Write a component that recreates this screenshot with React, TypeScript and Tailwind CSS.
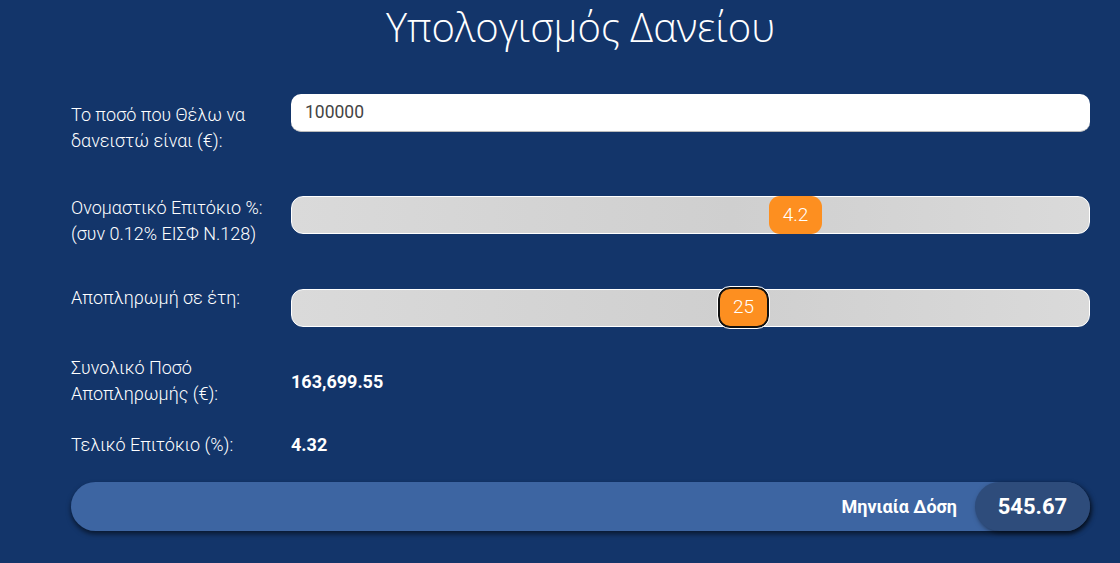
import React from "react";

const roboto = "font-['Roboto',_'Liberation_Sans',_sans-serif]";

function Slider({ value, left, boxed }: { value: string; left: string; boxed?: boolean }) {
  return (
    <div className="relative h-[38px] w-full rounded-[12px] border border-white bg-[linear-gradient(to_right,#dadada,#cfcfcf_55%,#dadada)]">
      {boxed ? (
        <div
          className={`absolute top-[-3px] ${left} flex h-[41px] w-[51px] items-center justify-center rounded-[12px] border-2 border-[#111] bg-[#fd8f20] text-[19px] font-light text-white outline outline-1 outline-white`}
        >
          {value}
        </div>
      ) : (
        <div
          className={`absolute top-[-1px] ${left} flex h-[38px] w-[53px] items-center justify-center rounded-[11px] bg-[#fd8f20] text-[19px] font-light text-white`}
        >
          {value}
        </div>
      )}
    </div>
  );
}

export default function App() {
  return (
    <div className={`min-h-[563px] w-full bg-[#13356a] text-white ${roboto}`}>
      <div className="ml-[71px] w-[1019px]">
        <h1 className="h-[60px] pt-[2px] text-center font-['Open_Sans',_sans-serif] text-[40px] font-light leading-[50px] text-white">
          Υπολογισμός Δανείου
        </h1>

        <div className="mt-[34px] flex h-[102px] items-start">
          <div className="mt-[8px] w-[220px] text-[18px] font-light leading-[26px]">
            Το ποσό που Θέλω να
            <br />
            δανειστώ είναι (€):
          </div>
          <div className="flex h-[38px] flex-1 items-center rounded-[10px] border-b border-[#bbb] bg-white px-[14px] text-[17.5px] text-[#444]">
            100000
          </div>
        </div>

        <div className="flex h-[89px] items-start">
          <div className="-mt-[1px] w-[220px] text-[18px] font-light leading-[26px]">
            Ονομαστικό Επιτόκιο %:
            <br />
            (συν 0.12% ΕΙΣΦ Ν.128)
          </div>
          <div className="flex-1">
            <Slider value="4.2" left="left-[477px]" />
          </div>
        </div>

        <div className="flex h-[70px] items-start">
          <div className="w-[220px] text-[18px] font-light leading-[26px]">Αποπληρωμή σε έτη:</div>
          <div className="mt-[4px] flex-1">
            <Slider value="25" left="left-[426px]" boxed />
          </div>
        </div>

        <div className="flex h-[77px] items-start">
          <div className="flex h-[52px] items-center">
            <div className="w-[220px] text-[18px] font-light leading-[26px]">
              Συνολικό Ποσό
              <br />
              Αποπληρωμής (€):
            </div>
            <div className="text-[18px] font-bold">163,699.55</div>
          </div>
        </div>

        <div className="flex h-[50px] items-start">
          <div className="w-[220px] text-[18px] font-light leading-[26px]">Τελικό Επιτόκιο (%):</div>
          <div className="text-[18px] font-bold leading-[26px]">4.32</div>
        </div>

        <div className="flex h-[49px] items-center justify-end rounded-full bg-[#3d65a2] shadow-[0_3px_5px_rgba(0,0,0,0.55)]">
          <span className="mr-[18px] text-[18px] font-bold">Μηνιαία Δόση</span>
          <div className="flex h-[49px] w-[115px] items-center justify-center rounded-full bg-[#2e4c7b] text-[22px] font-bold shadow-[2px_2px_5px_rgba(0,0,0,0.5)]">
            545.67
          </div>
        </div>
      </div>
    </div>
  );
}
